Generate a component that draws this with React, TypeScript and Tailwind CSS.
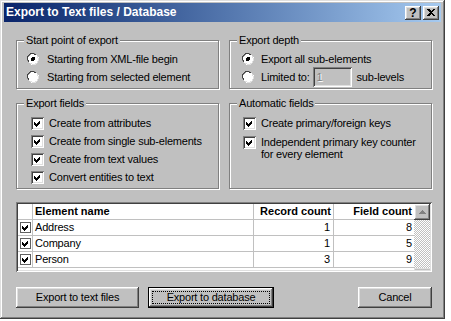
import React from "react";

const raised =
  "shadow-[inset_-1px_-1px_0_#404040,inset_1px_1px_0_#ffffff,inset_-2px_-2px_0_#808080,inset_2px_2px_0_#dfdfdf]";
const sunken =
  "shadow-[inset_1px_1px_0_#808080,inset_-1px_-1px_0_#ffffff,inset_2px_2px_0_#404040,inset_-2px_-2px_0_#dfdfdf]";

function Radio({ checked }: { checked?: boolean }) {
  return (
    <svg width="12" height="12" viewBox="0 0 12 12" className="shrink-0" shapeRendering="crispEdges">
      <circle cx="6" cy="6" r="5.5" fill="#fff" />
      <path d="M1 8 A5.5 5.5 0 0 1 8 1" stroke="#808080" strokeWidth="1" fill="none" />
      <path d="M2 8.5 A4.5 4.5 0 0 1 8.5 2" stroke="#404040" strokeWidth="1" fill="none" />
      <path d="M11 4 A5.5 5.5 0 0 1 4 11" stroke="#ffffff" strokeWidth="1" fill="none" />
      <path d="M10 3.5 A4.5 4.5 0 0 1 3.5 10" stroke="#dfdfdf" strokeWidth="1" fill="none" />
      {checked && <circle cx="6" cy="6" r="2" fill="#000" />}
    </svg>
  );
}

function Check() {
  return (
    <svg width="7" height="7" viewBox="0 0 7 7" shapeRendering="crispEdges">
      <polygon points="0,2 2,4 6,0 6,3 2,7 0,5" fill="#000" />
    </svg>
  );
}

function CheckBox() {
  return (
    <div className={`w-[13px] h-[13px] bg-white shrink-0 flex items-center justify-center ${sunken}`}>
      <Check />
    </div>
  );
}

function GridCheck() {
  return (
    <div className="w-[11px] h-[11px] bg-white border border-[#606060] flex items-center justify-center">
      <Check />
    </div>
  );
}

function Group({
  label,
  className,
  children,
}: {
  label: string;
  className: string;
  children: React.ReactNode;
}) {
  return (
    <div
      className={`relative border border-[#808080] shadow-[inset_1px_1px_0_#ffffff,1px_1px_0_#ffffff] ${className}`}
    >
      <div className="absolute left-[7px] top-[-7px] bg-[#c0c0c0] px-[2px] leading-[13px]">{label}</div>
      {children}
    </div>
  );
}

function Button({
  children,
  className,
  def,
}: {
  children: React.ReactNode;
  className: string;
  def?: boolean;
}) {
  if (def) {
    return (
      <div className={`h-[21px] border border-black ${className}`}>
        <div className={`h-full w-full flex items-center justify-center p-[3px] ${raised}`}>
          <div className="h-full w-full flex items-center justify-center border border-dotted border-black">
            {children}
          </div>
        </div>
      </div>
    );
  }
  return (
    <div className={`h-[21px] flex items-center justify-center ${raised} ${className}`}>{children}</div>
  );
}

const rows = [
  { name: "Address", rec: 1, fields: 8 },
  { name: "Company", rec: 1, fields: 5 },
  { name: "Person", rec: 3, fields: 9 },
];

export default function App() {
  return (
    <div className="w-[451px] h-[321px] bg-white font-['Liberation_Sans',Arial,sans-serif] text-[11px] text-black tracking-[-0.2px] leading-[13px]">
      <div className="w-[445px] h-[319px] bg-[#c0c0c0] pt-[3px] pl-[4px] pr-[4px] shadow-[inset_-1px_-1px_0_#404040,inset_1px_1px_0_#dfdfdf,inset_-2px_-2px_0_#808080,inset_2px_2px_0_#ffffff] flex flex-col">
        {/* Title bar */}
        <div className="h-[19px] w-[437px] flex items-center justify-between bg-gradient-to-r from-[#0a246a] to-[#a6caf0] pl-[2px] pr-[2px]">
          <span className="text-white font-bold text-[12px] tracking-normal">Export to Text files / Database</span>
          <div className="flex gap-[2px]">
            <div className={`w-[16px] h-[14px] bg-[#c0c0c0] flex items-center justify-center font-bold text-[12px] leading-[12px] tracking-normal ${raised}`}>
              ?
            </div>
            <div className={`w-[16px] h-[14px] bg-[#c0c0c0] flex items-center justify-center ${raised}`}>
              <svg width="8" height="7" viewBox="0 0 8 7" shapeRendering="crispEdges">
                <path d="M0 0h2l2 2 2-2h2L5 3.5 8 7H6L4 5 2 7H0l3-3.5z" fill="#000" />
              </svg>
            </div>
          </div>
        </div>

        <div className="ml-[12px] w-[416px] flex flex-col">
          {/* Row 1 */}
          <div className="mt-[18px] flex gap-[10px]">
            <Group label="Start point of export" className="w-[203px] h-[49px] pt-[9px] pl-[10px]">
              <div className="h-[18px] flex items-center gap-[8px]">
                <Radio checked />
                <span>Starting from XML-file begin</span>
              </div>
              <div className="h-[18px] flex items-center gap-[8px]">
                <Radio />
                <span>Starting from selected element</span>
              </div>
            </Group>
            <Group label="Export depth" className="w-[203px] h-[49px] pt-[9px] pl-[12px]">
              <div className="h-[18px] flex items-center gap-[7px]">
                <Radio checked />
                <span>Export all sub-elements</span>
              </div>
              <div className="h-[18px] flex items-center gap-[7px]">
                <Radio />
                <span>Limited to:</span>
                <div className={`ml-[-4px] w-[39px] h-[20px] bg-[#c0c0c0] flex items-center pl-[4px] text-[#808080] [text-shadow:1px_1px_0_#fff] ${sunken}`}>
                  1
                </div>
                <span className="ml-[-2px]">sub-levels</span>
              </div>
            </Group>
          </div>

          {/* Row 2 */}
          <div className="mt-[14px] flex gap-[10px]">
            <Group label="Export fields" className="w-[203px] h-[86px] pt-[10px] pl-[14px]">
              {[
                "Create from attributes",
                "Create from single sub-elements",
                "Create from text values",
                "Convert entities to text",
              ].map((t) => (
                <div key={t} className="h-[18px] flex items-center gap-[5px]">
                  <CheckBox />
                  <span>{t}</span>
                </div>
              ))}
            </Group>
            <Group label="Automatic fields" className="w-[203px] h-[86px] pt-[10px] pl-[13px]">
              <div className="h-[18px] flex items-center gap-[5px]">
                <CheckBox />
                <span>Create primary/foreign keys</span>
              </div>
              <div className="mt-[4px] flex items-start gap-[5px] leading-[12px]">
                <CheckBox />
                <span>
                  Independent primary key counter
                  <br />
                  for every element
                </span>
              </div>
            </Group>
          </div>

          {/* Table */}
          <div className={`mt-[13px] h-[70px] bg-white p-[2px] ${sunken}`}>
            <div className="flex h-full">
              <div className="flex-1 flex flex-col">
                <div className="h-[16px] flex border-b border-[#c0c0c0] font-bold tracking-normal">
                  <div className="w-[15px] border-r border-[#c0c0c0]" />
                  <div className="w-[221px] border-r border-[#c0c0c0] pl-[2px] flex items-center">Element name</div>
                  <div className="w-[80px] border-r border-[#c0c0c0] pr-[2px] flex items-center justify-end">Record count</div>
                  <div className="flex-1 pr-[2px] flex items-center justify-end">Field count</div>
                </div>
                {rows.map((r) => (
                  <div key={r.name} className="h-[16px] flex border-b border-[#c0c0c0]">
                    <div className="w-[15px] border-r border-[#c0c0c0] flex items-center justify-center">
                      <GridCheck />
                    </div>
                    <div className="w-[221px] border-r border-[#c0c0c0] pl-[2px] flex items-center">{r.name}</div>
                    <div className="w-[80px] border-r border-[#c0c0c0] pr-[3px] flex items-center justify-end">{r.rec}</div>
                    <div className="flex-1 pr-[2px] flex items-center justify-end">{r.fields}</div>
                  </div>
                ))}
              </div>
              <div className="w-[16px] flex flex-col">
                <div className={`h-[16px] bg-[#c0c0c0] flex items-center justify-center ${raised}`}>
                  <svg width="7" height="4" viewBox="0 0 7 4" shapeRendering="crispEdges">
                    <polygon points="3.5,0 7,4 0,4" fill="#808080" />
                  </svg>
                </div>
                <div className="flex-1 bg-[repeating-conic-gradient(#c0c0c0_0_25%,#ffffff_0_50%)] bg-[length:2px_2px]" />
                <div className="h-[2px] bg-[#c0c0c0] shadow-[inset_1px_1px_0_#dfdfdf]" />
              </div>
            </div>
          </div>

          {/* Buttons */}
          <div className="mt-[15px] flex">
            <Button className="w-[123px]">Export to text files</Button>
            <Button def className="ml-[9px] w-[126px]">
              Export to database
            </Button>
            <div className="flex-1" />
            <Button className="w-[74px]">Cancel</Button>
          </div>
        </div>
      </div>
    </div>
  );
}
